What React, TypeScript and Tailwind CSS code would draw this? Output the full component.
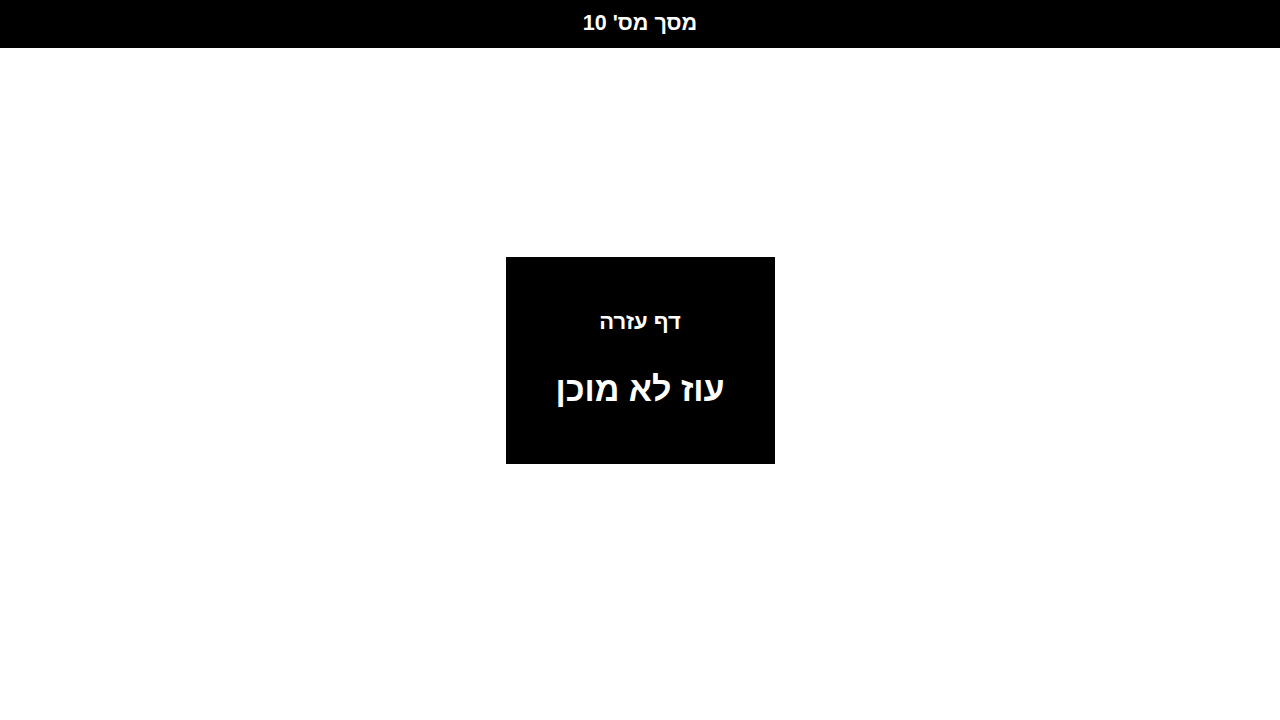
export default function App() {
  return (
    <div dir="rtl" className="relative h-[720px] w-full bg-white" style={{ fontFamily: '"Liberation Sans", Arial, sans-serif' }}>
      <header className="flex h-12 items-center justify-center bg-black text-white">
        <h1 className="text-[21.5px] font-bold leading-none">מסך מס' 10</h1>
      </header>
      <div className="absolute inset-0 flex items-center justify-center">
        <div className="flex w-[269px] flex-col items-center bg-black pt-[54px] pb-[58px] text-white">
          <h2 className="text-[22px] font-bold leading-none">דף עזרה</h2>
          <h1 className="mt-[39px] text-[34px] font-bold leading-none">עוז לא מוכן</h1>
        </div>
      </div>
    </div>
  );
}
